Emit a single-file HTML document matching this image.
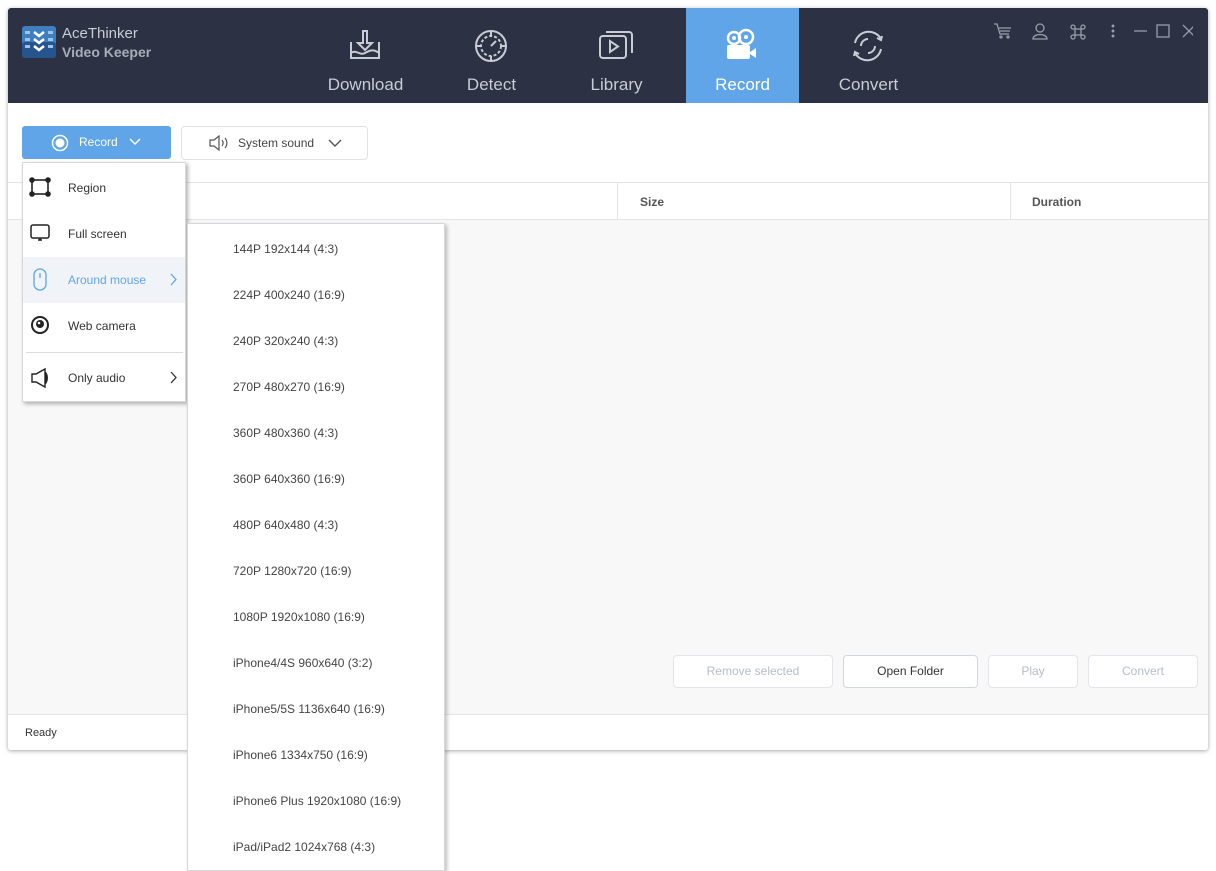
<!DOCTYPE html>
<html><head><style>
*{margin:0;padding:0;box-sizing:border-box}
body{width:1216px;height:871px;background:#fff;position:relative;font-family:"Liberation Sans",sans-serif;overflow:hidden}
.win{position:absolute;left:8px;top:8px;width:1200px;height:742px;background:#f8f8f9;box-shadow:0 1px 4px rgba(0,0,0,.35);border-radius:3px;overflow:hidden}
.hdr{position:absolute;left:0;top:0;width:1200px;height:95px;background:#2c3144}
.tab{position:absolute;top:0;height:95px;width:113px;text-align:center;color:#c9ccd4;font-size:17px}
.tab svg{position:absolute;left:38px;top:20px}
.tab span{position:absolute;left:0;right:0;top:67px}
.abs{position:absolute}
.btn{position:absolute;border:1px solid #e3e5ea;border-radius:4px;background:#fff;font-size:12px;color:#b7bcc5;text-align:center;line-height:31px;height:33px}
.menu{position:absolute;background:#fff;border:1px solid #d8d8d8;box-shadow:2px 2px 4px rgba(0,0,0,.3);font-size:12px;color:#333}
.mi{position:absolute;left:0;width:161px;height:46px;line-height:46px;padding-left:45px}
.sub div{position:absolute;left:45px;font-size:12px;color:#444}
</style></head><body>
<div class="win">
<div class="hdr">
 <svg class="abs" style="left:14px;top:18px" width="34" height="32"><rect width="34" height="32" rx="3" fill="#3f7fc0"/><rect y="16" width="34" height="16" rx="3" fill="#25558c"/><g fill="#9cc3ea"><rect x="3" y="5" width="5" height="3"/><rect x="3" y="12" width="5" height="3"/><rect x="3" y="19" width="5" height="3"/><rect x="26" y="5" width="5" height="3"/><rect x="26" y="12" width="5" height="3"/><rect x="26" y="19" width="5" height="3"/></g><path d="M12 6l5 4 5-4M12 13l5 4 5-4M12 20l5 4 5-4" stroke="#fff" stroke-width="2.5" fill="none"/></svg>
 <div class="abs" style="left:54px;top:17px;color:#c9ccd4;font-size:15px">AceThinker</div>
 <div class="abs" style="left:54px;top:36px;color:#a9adb8;font-size:14px;font-weight:bold">Video Keeper</div>
 <div class="tab" style="left:301px"><svg width="36" height="36" fill="none" stroke="#c9ccd4" stroke-width="2"><path d="M16 3h4v12h5l-7 7-7-7h5z"/><path d="M4 14v16h28V14M4 25c5-4 9 3 14 0s9-4 14 0"/></svg><span>Download</span></div>
 <div class="tab" style="left:427px"><svg width="36" height="36" fill="none" stroke="#c9ccd4" stroke-width="2"><circle cx="18" cy="18" r="15"/><circle cx="18" cy="18" r="10" stroke-dasharray="3 2"/><path d="M18 18l5-5M18 3v5M18 28v5M3 18h5M28 18h5"/></svg><span>Detect</span></div>
 <div class="tab" style="left:552px"><svg width="36" height="36" fill="none" stroke="#c9ccd4" stroke-width="2"><rect x="2" y="8" width="26" height="22" rx="3"/><path d="M8 4h23a3 3 0 0 1 3 3v18"/><path d="M12 13v11l8-5.5z"/></svg><span>Library</span></div>
 <div class="tab" style="left:678px;background:#5fa5e8;color:#fff"><svg width="36" height="36"><circle cx="10" cy="10" r="6" fill="none" stroke="#fff" stroke-width="2.5"/><circle cx="22" cy="9" r="7" fill="none" stroke="#fff" stroke-width="2.5"/><circle cx="10" cy="10" r="2" fill="#fff"/><circle cx="22" cy="9" r="2" fill="#fff"/><rect x="3" y="17" width="23" height="14" rx="2" fill="#fff"/><path d="M26 24l6-4v10l-6-4z" fill="#fff"/></svg><span>Record</span></div>
 <div class="tab" style="left:804px"><svg width="36" height="36" fill="none" stroke="#c9ccd4" stroke-width="2"><path d="M5 15a14 14 0 0 1 26-4M31 21a14 14 0 0 1-26 4"/><path d="M27 10l4 2 1-4M9 26l-4-2-1 4"/><path d="M11 18a7 7 0 0 1 7-7M25 18a7 7 0 0 1-7 7"/></svg><span>Convert</span></div>
 <svg class="abs" style="left:985px;top:14px" width="200" height="20" fill="none" stroke="#9a9eaa" stroke-width="1.3">
  <path d="M1 2h3l3 10h9M6 6h12M7 9h10"/><circle cx="8" cy="15" r="1"/><circle cx="15" cy="15" r="1"/>
  <circle cx="47" cy="6" r="4"/><path d="M40 17c0-6 14-6 14 0z"/>
  <path d="M82 7h6v6h-6zM82 7a2.5 2.5 0 1 1 0 0M82 7h-2a2 2 0 1 1 2-2v2M88 7V5a2 2 0 1 1 2 2h-2M88 13h2a2 2 0 1 1-2 2v-2M82 13v2a2 2 0 1 1-2-2h2"/>
  <circle cx="120" cy="4" r=".8" fill="#9a9eaa"/><circle cx="120" cy="9" r=".8" fill="#9a9eaa"/><circle cx="120" cy="14" r=".8" fill="#9a9eaa"/>
  <path d="M141 9h13"/><rect x="164" y="3" width="12" height="12"/><path d="M190 3l12 12M202 3l-12 12"/>
 </svg>
</div>
<div class="abs" style="left:0;top:95px;width:1200px;height:80px;background:#fff;border-bottom:1px solid #e2e4e8"></div>
<div class="abs" style="left:14px;top:118px;width:149px;height:33px;background:#5fa5e8;border-radius:3px;color:#fff;font-size:12px;line-height:33px">
 <svg class="abs" style="left:29px;top:8px" width="18" height="18"><circle cx="9" cy="9" r="7.5" fill="none" stroke="#fff" stroke-width="1.5"/><circle cx="9" cy="9" r="4.5" fill="#fff"/></svg>
 <span class="abs" style="left:57px">Record</span>
 <svg class="abs" style="left:107px;top:12px" width="12" height="8"><path d="M1 1l5 5 5-5" stroke="#fff" fill="none" stroke-width="1.4"/></svg>
</div>
<div class="abs" style="left:173px;top:118px;width:187px;height:34px;background:#fff;border:1px solid #dfe2e7;border-radius:4px;font-size:12px;color:#444;line-height:32px">
 <svg class="abs" style="left:27px;top:8px" width="20" height="16" fill="none" stroke="#555" stroke-width="1.2"><path d="M1 5h4l5-4v14l-5-4H1zM13 5c1.5 2 1.5 4 0 6M16 3c2.5 3 2.5 7 0 10"/></svg>
 <span class="abs" style="left:56px">System sound</span>
 <svg class="abs" style="left:146px;top:12px" width="14" height="9"><path d="M1 1l6 6 6-6" stroke="#555" fill="none" stroke-width="1.4"/></svg>
</div>
<div class="abs" style="left:0;top:175px;width:1200px;height:37px;background:#fff;border-bottom:1px solid #e2e4e8;font-size:12px;font-weight:bold;color:#555">
 <div class="abs" style="left:609px;top:0;width:1px;height:37px;background:#e5e5e5"></div>
 <span class="abs" style="left:632px;top:12px">Size</span>
 <div class="abs" style="left:1002px;top:0;width:1px;height:37px;background:#e5e5e5"></div>
 <span class="abs" style="left:1024px;top:12px">Duration</span>
</div>
<div class="btn" style="left:665px;top:647px;width:160px">Remove selected</div>
<div class="btn" style="left:835px;top:647px;width:135px;color:#333;border-color:#d2d6de">Open Folder</div>
<div class="btn" style="left:980px;top:647px;width:90px">Play</div>
<div class="btn" style="left:1080px;top:647px;width:110px">Convert</div>
<div class="abs" style="left:0;top:706px;width:1200px;height:36px;background:#fff;border-top:1px solid #e2e4e8;font-size:11px;color:#333"><span class="abs" style="left:17px;top:12px">Ready</span></div>
</div>
<div class="menu" style="left:22px;top:162px;width:164px;height:240px">
 <div class="mi" style="top:2px">Region</div>
 <svg class="abs" style="left:6px;top:14px" width="22" height="20" fill="none" stroke="#222" stroke-width="1.6"><rect x="3" y="3" width="16" height="14"/><g fill="#222"><circle cx="3" cy="3" r="2"/><circle cx="19" cy="3" r="2"/><circle cx="3" cy="17" r="2"/><circle cx="19" cy="17" r="2"/></g></svg>
 <div class="mi" style="top:48px">Full screen</div>
 <svg class="abs" style="left:6px;top:61px" width="22" height="20" fill="none" stroke="#222" stroke-width="1.5"><rect x="2" y="1" width="18" height="13" rx="2"/><path d="M9 16h4M11 14v2"/></svg>
 <div class="mi" style="top:94px;background:#f0f4f9;color:#5fa5e8;width:162px">Around mouse</div>
 <svg class="abs" style="left:10px;top:105px" width="14" height="24" fill="none" stroke="#5fa5e8" stroke-width="1.3"><rect x="1" y="1" width="12" height="21" rx="6"/><path d="M7 5v5"/></svg>
 <svg class="abs" style="left:147px;top:110px" width="8" height="13"><path d="M1 1l5 5.5-5 5.5" stroke="#5fa5e8" fill="none" stroke-width="1.3"/></svg>
 <div class="mi" style="top:140px">Web camera</div>
 <svg class="abs" style="left:7px;top:152px" width="20" height="20"><circle cx="10" cy="10" r="8" fill="none" stroke="#222" stroke-width="2"/><circle cx="10" cy="9" r="4" fill="#222"/><circle cx="9" cy="8" r="1.3" fill="#fff"/></svg>
 <div class="abs" style="left:3px;top:189px;width:157px;height:1px;background:#ddd"></div>
 <div class="mi" style="top:192px">Only audio</div>
 <svg class="abs" style="left:7px;top:204px" width="20" height="22" fill="none" stroke="#222" stroke-width="1.4"><path d="M2 7h4l9-5v18l-9-5H2z"/><path d="M15 5c3 3 3 9 0 12" fill="#222"/></svg>
 <svg class="abs" style="left:147px;top:208px" width="8" height="13"><path d="M1 1l5 5.5-5 5.5" stroke="#333" fill="none" stroke-width="1.3"/></svg>
</div>
<div class="menu sub" style="left:187px;top:223px;width:258px;height:648px;box-shadow:2px 2px 4px rgba(0,0,0,.25)">
 <div style="top:18px">144P 192x144 (4:3)</div>
 <div style="top:64px">224P 400x240 (16:9)</div>
 <div style="top:110px">240P 320x240 (4:3)</div>
 <div style="top:156px">270P 480x270 (16:9)</div>
 <div style="top:202px">360P 480x360 (4:3)</div>
 <div style="top:248px">360P 640x360 (16:9)</div>
 <div style="top:294px">480P 640x480 (4:3)</div>
 <div style="top:340px">720P 1280x720 (16:9)</div>
 <div style="top:386px">1080P 1920x1080 (16:9)</div>
 <div style="top:432px">iPhone4/4S 960x640 (3:2)</div>
 <div style="top:478px">iPhone5/5S 1136x640 (16:9)</div>
 <div style="top:524px">iPhone6 1334x750 (16:9)</div>
 <div style="top:570px">iPhone6 Plus 1920x1080 (16:9)</div>
 <div style="top:616px">iPad/iPad2 1024x768 (4:3)</div>
</div>
</body></html>
